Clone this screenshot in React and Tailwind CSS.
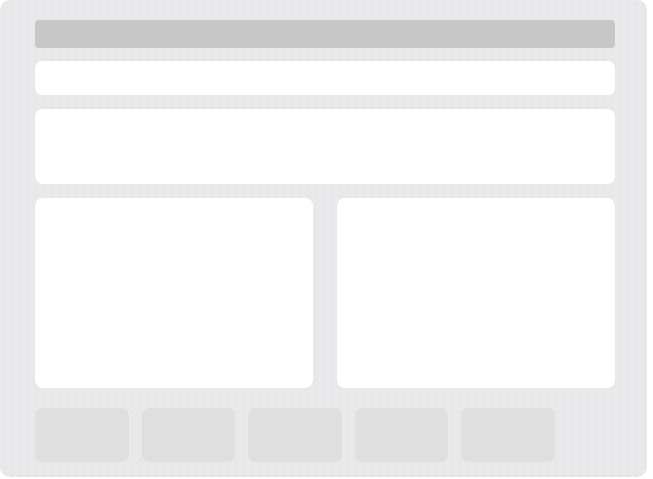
export default function App() {
  return (
    <div className="w-[653px] h-[479px] bg-white">
      <div className="w-[647px] h-[477px] rounded-[10px] bg-[#e9e8ea] bg-[radial-gradient(circle,#e0dfe2_0.6px,transparent_1px)] bg-[size:8px_8px] pl-[35px] pt-[20px]">
        <div className="w-[580px] flex flex-col">
          <div className="h-[28px] rounded-[4px] bg-[#c8c7c7]" />
          <div className="mt-[13px] h-[34px] rounded-[7px] bg-white" />
          <div className="mt-[14px] h-[75px] rounded-[8px] bg-white" />
          <div className="mt-[14px] h-[190px] grid grid-cols-2 gap-[24px]">
            <div className="rounded-[8px] bg-white" />
            <div className="rounded-[8px] bg-white" />
          </div>
          <div className="mt-[20px] h-[54px] flex gap-[13px]">
            <div className="w-[93.5px] rounded-[8px] bg-[#e0dfe0]" />
            <div className="w-[93.5px] rounded-[8px] bg-[#e0dfe0]" />
            <div className="w-[93.5px] rounded-[8px] bg-[#e0dfe0]" />
            <div className="w-[93.5px] rounded-[8px] bg-[#e0dfe0]" />
            <div className="w-[93.5px] rounded-[8px] bg-[#e0dfe0]" />
          </div>
        </div>
      </div>
    </div>
  );
}
